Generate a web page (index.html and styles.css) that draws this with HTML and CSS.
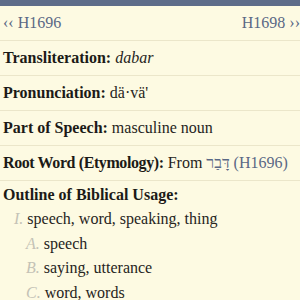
FILE: index.html
```html
<!DOCTYPE html>
<html lang="en">
<head>
    <meta charset="UTF-8">
    <meta name="viewport" content="width=device-width, initial-scale=1.0">
    <title>H1697 - dabar</title>
    <link rel="stylesheet" href="styles.css">
</head>
<body>
    <div class="top-bar"></div>

    <div class="nav-row">
        <a class="nav-link">&lsaquo;&lsaquo; H1696</a>
        <a class="nav-link">H1698 &rsaquo;&rsaquo;</a>
    </div>

    <div class="entry-row">
        <span class="label">Transliteration:</span> <i>dabar</i>
    </div>
    <div class="entry-row">
        <span class="label">Pronunciation:</span> dä·vä'
    </div>
    <div class="entry-row">
        <span class="label">Part of Speech:</span> masculine noun
    </div>
    <div class="entry-row">
        <span class="label tight">Root Word (Etymology):</span> From <a class="ref"><span lang="he">דָּבַר</span> (H1696)</a>
    </div>

    <div class="outline">
        <div class="label outline-title">Outline of Biblical Usage:</div>
        <ol class="usage-list">
            <li><span class="num">I.</span> speech, word, speaking, thing
                <ol class="usage-list sub">
                    <li><span class="num">A.</span> speech</li>
                    <li><span class="num">B.</span> saying, utterance</li>
                    <li><span class="num">C.</span> word, words</li>
                </ol>
            </li>
        </ol>
    </div>
</body>
</html>
```

FILE: styles.css
```css
body {
    margin: 0;
    padding: 0;
    background: #fdfae2;
    color: #262421;
    font-family: "Liberation Serif", serif;
    font-size: 16px;
    overflow: hidden;
}
.top-bar {
    height: 6px;
    background-color: #5e6c89;
}
.nav-row {
    display: flex;
    justify-content: space-between;
    align-items: center;
    height: 34px;
    padding: 0 0 0 3px;
    border-bottom: 1px solid #ebe6ca;
}
.nav-link {
    color: #5a6885;
    font-size: 16px;
}
.entry-row {
    height: 34px;
    line-height: 34px;
    padding-left: 3px;
    border-bottom: 1px solid #ebe6ca;
    white-space: nowrap;
}
.label {
    font-weight: bold;
    color: #1c1a17;
}
.label.tight {
    letter-spacing: -0.4px;
}
.ref {
    color: #5a6885;
}
.outline {
    padding: 2px 0 0 3px;
}
.outline-title {
    line-height: 24px;
}
.usage-list {
    list-style: none;
    margin: 0;
    padding: 0 0 0 11px;
}
.usage-list li {
    line-height: 24.5px;
}
.usage-list.sub {
    padding-left: 12px;
}
.num {
    color: #c4c2b6;
    font-style: italic;
}
```
